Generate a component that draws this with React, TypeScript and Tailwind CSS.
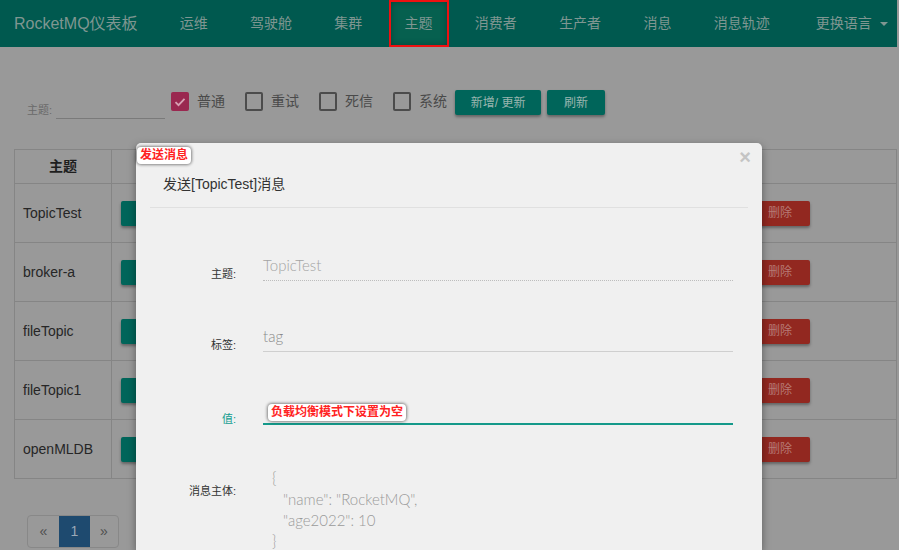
import React from 'react';

const navItems = ['运维', '驾驶舱', '集群', '主题', '消费者', '生产者', '消息', '消息轨迹'];
const topics = ['TopicTest', 'broker-a', 'fileTopic', 'fileTopic1', 'openMLDB'];
const filters = [
  { label: '普通', checked: true },
  { label: '重试', checked: false },
  { label: '死信', checked: false },
  { label: '系统', checked: false },
];

const sans = '"Liberation Sans", "Noto Sans CJK SC", sans-serif';

function Note({ text }: { text: string }) {
  return (
    <span className="block bg-white text-[#ff2222] text-[12px] font-bold leading-[17px] px-[3px] rounded-[4px] shadow-[0_0_3px_1px_rgba(0,0,0,0.45)] whitespace-nowrap">
      {text}
    </span>
  );
}

export default function App() {
  return (
    <div className="relative w-[899px] h-[550px] overflow-hidden bg-[#999999]" style={{ fontFamily: sans }}>
      {/* navbar */}
      <div className="flex items-center w-[897px] h-[47px] bg-[#00594f] text-[#7f9691]">
        <div className="pl-[14px] pr-[21px] text-[16px]">RocketMQ仪表板</div>
        {navItems.map((n) => (
          <div key={n} className="relative h-full flex items-center px-[21.15px] text-[14px]">
            {n === '主题' && (
              <div className="absolute top-0 bottom-0 left-[6px] right-[5px] border-2 border-[#ee1111] bg-[#06604f] shadow-[inset_0_0_6px_rgba(0,0,0,0.3)]" />
            )}
            <span className="relative">{n}</span>
          </div>
        ))}
        <div className="flex items-center pl-[25px] text-[14px]">
          更换语言
          <span className="ml-[8px] w-0 h-0 border-l-[4px] border-r-[4px] border-t-[4px] border-l-transparent border-r-transparent border-t-[#7f9691]" />
        </div>
      </div>

      {/* filters */}
      <div className="flex items-start mt-[43px] h-[29px]">
        <div className="flex items-end h-[29px] ml-[27px]">
          <span className="text-[11px] leading-none mb-[3px] text-[#6a6a6a]">主题:</span>
          <div className="ml-[4px] w-[109px] h-[29px] border-b border-[#7a7a7a]" />
        </div>
        <div className="flex items-center ml-[6px] mt-[2px] h-[19px]">
          {filters.map((f, i) => (
            <div key={f.label} className={`flex items-center ${i > 0 ? 'ml-[20px]' : ''}`}>
              {f.checked ? (
                <span className="w-[18px] h-[19px] rounded-[2px] bg-[#9a2850] flex items-center justify-center">
                  <svg width="12" height="10" viewBox="0 0 12 10">
                    <path d="M1.5 5.2 L4.5 8.2 L10.5 1.8" stroke="#d7a0b3" strokeWidth="1.8" fill="none" />
                  </svg>
                </span>
              ) : (
                <span className="w-[18px] h-[19px] rounded-[2px] border-2 border-[#4c4c4c]" />
              )}
              <span className="ml-[8px] text-[14px] text-[#4a4a4a]">{f.label}</span>
            </div>
          ))}
        </div>
        <button className="ml-[8px] w-[86px] h-[25px] rounded-[2px] bg-[#00655a] text-[12px] text-[#9ab5af] shadow-[0_2px_3px_rgba(0,0,0,0.35)]">
          新增/ 更新
        </button>
        <button className="ml-[6px] w-[58px] h-[25px] rounded-[2px] bg-[#00655a] text-[12px] text-[#9ab5af] shadow-[0_2px_3px_rgba(0,0,0,0.35)]">
          刷新
        </button>
      </div>

      {/* table */}
      <table className="mt-[30px] ml-[14px] w-[883px] border-collapse text-[14px]">
        <thead>
          <tr>
            <th className="w-[97px] h-[34px] border border-[#858585] font-bold text-[#1e1e1e]">主题</th>
            <th className="h-[34px] border border-[#858585]" />
          </tr>
        </thead>
        <tbody>
          {topics.map((t) => (
            <tr key={t}>
              <td className="h-[59px] border border-[#858585] pl-[8px] text-[#262626]">{t}</td>
              <td className="h-[59px] border border-[#858585] pl-[9px]">
                <div className="flex gap-[6px]">
                  {[151, 151, 151, 152].map((w, i) => (
                    <span key={i} className="h-[25px] rounded-[2px] bg-[#00655a] shadow-[0_2px_3px_rgba(0,0,0,0.35)]" style={{ width: w }} />
                  ))}
                  <span className="w-[60px] h-[25px] rounded-[2px] bg-[#922820] text-[12px] leading-[25px] text-center text-[#b77a75] shadow-[0_2px_3px_rgba(0,0,0,0.35)]">
                    删除
                  </span>
                </div>
              </td>
            </tr>
          ))}
        </tbody>
      </table>

      {/* pagination */}
      <div className="mt-[36px] ml-[27px] flex w-[92px] h-[33px] border border-[#888888] rounded-[4px] overflow-hidden text-[14px]">
        <span className="w-[31px] flex items-center justify-center text-[#4f4f4f]">«</span>
        <span className="w-[31px] flex items-center justify-center bg-[#1e4a6f] text-[#9aa8b6]">1</span>
        <span className="flex-1 flex items-center justify-center text-[#4f4f4f]">»</span>
      </div>

      {/* modal */}
      <div className="absolute left-[136px] top-[143px] w-[626px] h-[407px] bg-[#f0f0f0] rounded-t-[5px] shadow-[0_3px_9px_rgba(0,0,0,0.4)]">
        <div className="absolute left-[1px] top-[4px] flex">
          <Note text="发送消息" />
        </div>
        <div className="relative h-[64px] pt-[33px] pl-[27px] pr-[28px] text-[14px] leading-[16px] text-[#333333]">
          发送[TopicTest]消息
          <span className="absolute right-[11px] top-[4px] text-[20px] leading-[20px] font-bold text-[#c4c4c4]">×</span>
        </div>
        <div className="mx-[14px] border-t border-[#e0e0e0]" />

        <div style={{ fontFamily: 'Lato, "Noto Sans CJK SC", sans-serif' }}>
          <div className="flex items-end mt-[41px]">
            <div className="w-[100px] text-right text-[11px] leading-none mb-[1px] text-[#333333]" style={{ fontFamily: sans }}>主题:</div>
            <div className="ml-[27px] w-[470px] h-[32px] border-b border-dotted border-[#bdbdbd] text-[15px] font-light text-[#a3a3a3] leading-[20px] pt-[6px]">
              TopicTest
            </div>
          </div>
          <div className="flex items-end mt-[39px]">
            <div className="w-[100px] text-right text-[11px] leading-none mb-[1px] text-[#333333]" style={{ fontFamily: sans }}>标签:</div>
            <div className="ml-[27px] w-[470px] h-[32px] border-b border-[#cfcfcf] text-[15px] font-light text-[#8a8a8a] leading-[20px] pt-[6px]">
              tag
            </div>
          </div>
          <div className="flex items-end mt-[39px]">
            <div className="w-[100px] text-right text-[11px] leading-none mb-[0px] text-[#109d8f]" style={{ fontFamily: sans }}>值:</div>
            <div className="relative ml-[27px] w-[470px] h-[34px] border-b-2 border-[#14998a]">
              <div className="absolute left-[5px] top-[13px] flex" style={{ fontFamily: sans }}>
                <Note text="负载均衡模式下设置为空" />
              </div>
            </div>
          </div>
          <div className="flex items-start mt-[43px]">
            <div className="w-[100px] text-right text-[11px] leading-none pt-[18px] text-[#333333]" style={{ fontFamily: sans }}>消息主体:</div>
            <div className="ml-[27px] pl-[9px] w-[470px] text-[15px] font-light leading-[21px] text-[#9a9a9a]">
              <div>{'{'}</div>
              <div className="pl-[11px]">"name": "RocketMQ",</div>
              <div className="pl-[11px]">"age2022": 10</div>
              <div>{'}'}</div>
            </div>
          </div>
        </div>
      </div>
    </div>
  );
}
